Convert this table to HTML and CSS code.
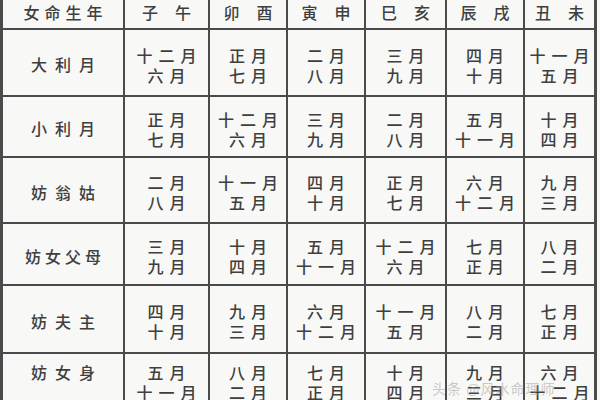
FILE: index.html
```html
<!DOCTYPE html>
<html lang="zh">
<head>
<meta charset="utf-8">
<link rel="stylesheet" href="styles.css">
</head>
<body>
<div class="page">
  <div class="grid">
    <div class="cell head label4">女命生年</div>
    <div class="cell head pair">子午</div>
    <div class="cell head pair">卯酉</div>
    <div class="cell head pair">寅申</div>
    <div class="cell head pair">巳亥</div>
    <div class="cell head pair">辰戌</div>
    <div class="cell head pair">丑未</div>

    <div class="cell label">大利月</div>
    <div class="cell m"><span>十二月</span><span>六月</span></div>
    <div class="cell m"><span>正月</span><span>七月</span></div>
    <div class="cell m"><span>二月</span><span>八月</span></div>
    <div class="cell m"><span>三月</span><span>九月</span></div>
    <div class="cell m"><span>四月</span><span>十月</span></div>
    <div class="cell m"><span>十一月</span><span>五月</span></div>

    <div class="cell label">小利月</div>
    <div class="cell m"><span>正月</span><span>七月</span></div>
    <div class="cell m"><span>十二月</span><span>六月</span></div>
    <div class="cell m"><span>三月</span><span>九月</span></div>
    <div class="cell m"><span>二月</span><span>八月</span></div>
    <div class="cell m"><span>五月</span><span>十一月</span></div>
    <div class="cell m"><span>十月</span><span>四月</span></div>

    <div class="cell label">妨翁姑</div>
    <div class="cell m"><span>二月</span><span>八月</span></div>
    <div class="cell m"><span>十一月</span><span>五月</span></div>
    <div class="cell m"><span>四月</span><span>十月</span></div>
    <div class="cell m"><span>正月</span><span>七月</span></div>
    <div class="cell m"><span>六月</span><span>十二月</span></div>
    <div class="cell m"><span>九月</span><span>三月</span></div>

    <div class="cell label label4">妨女父母</div>
    <div class="cell m"><span>三月</span><span>九月</span></div>
    <div class="cell m"><span>十月</span><span>四月</span></div>
    <div class="cell m"><span>五月</span><span>十一月</span></div>
    <div class="cell m"><span>十二月</span><span>六月</span></div>
    <div class="cell m"><span>七月</span><span>正月</span></div>
    <div class="cell m"><span>八月</span><span>二月</span></div>

    <div class="cell label">妨夫主</div>
    <div class="cell m"><span>四月</span><span>十月</span></div>
    <div class="cell m"><span>九月</span><span>三月</span></div>
    <div class="cell m"><span>六月</span><span>十二月</span></div>
    <div class="cell m"><span>十一月</span><span>五月</span></div>
    <div class="cell m"><span>八月</span><span>二月</span></div>
    <div class="cell m"><span>七月</span><span>正月</span></div>

    <div class="cell label last">妨女身</div>
    <div class="cell m last"><span>五月</span><span>十一月</span></div>
    <div class="cell m last"><span>八月</span><span>二月</span></div>
    <div class="cell m last"><span>七月</span><span>正月</span></div>
    <div class="cell m last"><span>十月</span><span>四月</span></div>
    <div class="cell m last"><span>九月</span><span>三月</span></div>
    <div class="cell m last"><span>六月</span><span>十二月</span></div>
  </div>
  <div class="watermark">头条 @风水命理师</div>
</div>
</body>
</html>
```

FILE: styles.css
```css
html, body {
  margin: 0;
  padding: 0;
  background: #f8f8f6;
}

.page {
  position: relative;
  width: 600px;
  height: 400px;
  overflow: hidden;
  background: #f8f8f6;
}

.grid {
  display: grid;
  grid-template-columns: 120px 83px 76px 76px 79px 76px 69px;
  grid-template-rows: 28px 65px 59px 64px 60px 66px 66px;
  gap: 2px;
  padding: 3px;
  margin-top: -3px;
  width: max-content;
  background: #4b4b4b;
  font-family: "Noto Sans CJK SC", "Noto Sans CJK TC", sans-serif;
  font-weight: 500;
  color: #3f3f3f;
}

.cell {
  background: #f8f8f6;
  display: flex;
  flex-direction: column;
  align-items: center;
  justify-content: center;
  font-size: 16px;
  line-height: 20px;
  white-space: nowrap;
}

.head {
  font-size: 16px;
  justify-content: flex-start;
  padding-top: 2px;
  box-sizing: border-box;
}

.head.pair {
  letter-spacing: 17px;
  padding-left: 17px;
}

.head.label4 {
  letter-spacing: 5px;
  padding-left: 5px;
}

.label {
  letter-spacing: 8px;
  padding-left: 8px;
  padding-top: 3px;
  box-sizing: border-box;
}

.label.label4 {
  letter-spacing: 4px;
  padding-left: 4px;
}

.m {
  letter-spacing: 6px;
  padding-left: 6px;
  padding-top: 4px;
  box-sizing: border-box;
}

.last {
  justify-content: flex-start;
  padding-top: 8px;
}

.watermark {
  position: absolute;
  left: 432px;
  top: 379px;
  font-family: "Noto Sans CJK SC", sans-serif;
  font-size: 14px;
  line-height: 18px;
  color: rgba(160, 160, 160, 0.55);
  letter-spacing: 1px;
}
```
